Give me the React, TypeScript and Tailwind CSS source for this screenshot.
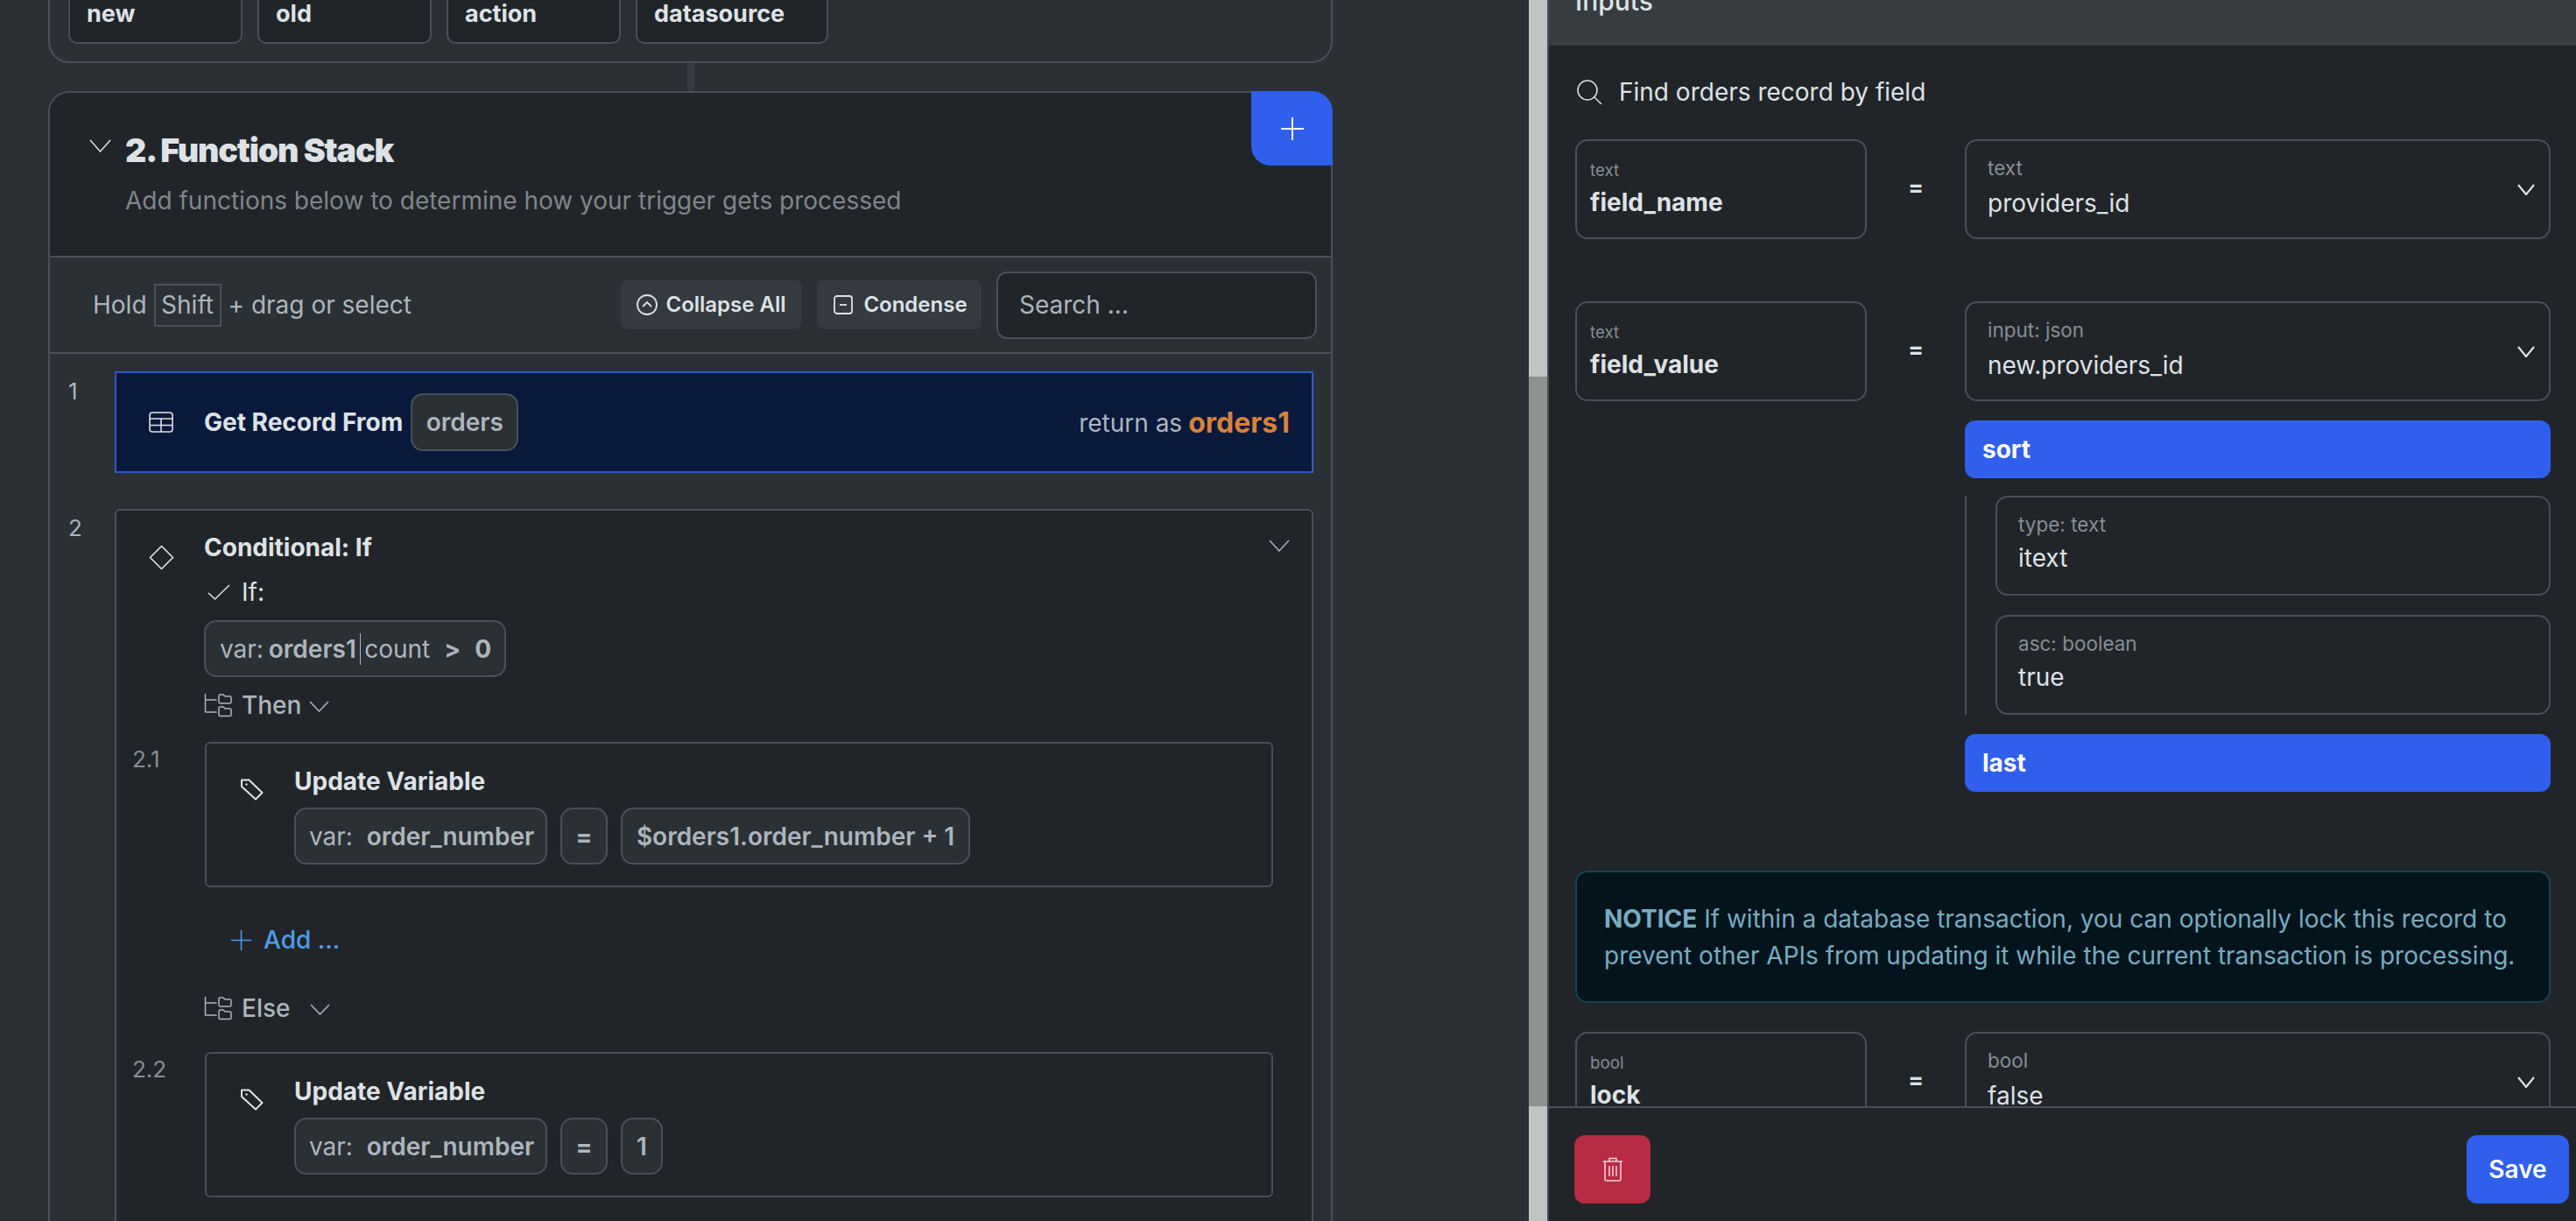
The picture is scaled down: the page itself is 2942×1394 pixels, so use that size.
import type { ReactNode } from "react"

function Chevron({ w = 24, h = 13, sw = 1.5, cls = "" }: { w?: number; h?: number; sw?: number; cls?: string }) {
    return (
        <svg width={w} height={h} viewBox={`0 0 ${w} ${h}`} fill="none" stroke="currentColor" strokeWidth={sw} className={"shrink-0 " + cls}>
            <polyline points={`1,1 ${w / 2},${h - 1} ${w - 1},1`} />
        </svg>
    )
}

function TableIcon() {
    return (
        <svg width="28" height="24" viewBox="0 0 28 24" fill="none" stroke="currentColor" strokeWidth="1.6" className="shrink-0">
            <rect x="1" y="1" width="26" height="22" rx="3" />
            <path d="M1 8h26M1 15.5h26M14 8v15" />
        </svg>
    )
}

function DiamondIcon() {
    return (
        <svg width="29" height="29" viewBox="0 0 29 29" fill="none" stroke="currentColor" strokeWidth="1.6" strokeLinejoin="round" className="shrink-0">
            <path d="M14.5 1.5 27.5 14.5 14.5 27.5 1.5 14.5Z" />
        </svg>
    )
}

function FolderTree() {
    return (
        <svg width="32" height="27" viewBox="0 0 32 27" fill="none" stroke="currentColor" strokeWidth="1.5" strokeLinejoin="round" className="shrink-0">
            <path d="M1.5 0v21h13M1.5 7h13" />
            <path d="M17 2.5q0-1.5 1.5-1.5h3.500l2 2h5.500q1.500 0 1.500 1.500v5q0 1.500-1.500 1.500h-11q-1.500 0-1.500-1.500z" />
            <path d="M17 16.500q0-1.500 1.500-1.500h3.500l2 2h5.500q1.500 0 1.500 1.500v5.500q0 1.500-1.500 1.500h-11q-1.500 0-1.500-1.500z" />
        </svg>
    )
}

function TagIcon() {
    return (
        <svg width="27" height="25" viewBox="0 0 27 25" fill="none" stroke="currentColor" strokeWidth="2" strokeLinejoin="round" className="shrink-0">
            <path d="M2 1.500h8.500L25.500 16 18 23.500 2 9z" />
            <circle cx="7.500" cy="6.500" r="1.200" fill="currentColor" stroke="none" />
        </svg>
    )
}

function Chip({ children, cls = "" }: { children: ReactNode; cls?: string }) {
    return (
        <div className={"flex h-[65px] items-center whitespace-pre rounded-[14px] border-2 border-[#495057] bg-[#2b3035] text-[28px] text-[#adb5bd] " + cls}>
            {children}
        </div>
    )
}

function UpdateVariable({ num, value, valueCls }: { num: string; value: string; valueCls: string }) {
    return (
        <div className="-ml-[82px] flex pr-[44px]">
            <div className="w-[83px] shrink-0 pt-[3px] text-[26px] leading-[34px] text-[#868e96]">{num}</div>
            <div className="flex h-[166px] flex-1 rounded-[6px] border-2 border-[#495057]">
                <div className="w-[100px] shrink-0 pl-[38px] pt-[40px] text-[#dee2e6]">
                    <TagIcon />
                </div>
                <div className="pt-[23px]">
                    <div className="text-[28px] font-bold leading-[40px] text-[#dee2e6]">Update Variable</div>
                    <div className="mt-[10px] flex gap-[15px]">
                        <Chip cls="w-[289px] pl-[15px]">
                            <span>var:  </span>
                            <span className="font-semibold">order_number</span>
                        </Chip>
                        <Chip cls="w-[54px] justify-center font-bold">=</Chip>
                        <Chip cls={"justify-center font-semibold " + valueCls}>{value}</Chip>
                    </div>
                </div>
            </div>
        </div>
    )
}

function Branch({ label, chevronCls }: { label: string; chevronCls: string }) {
    return (
        <div className="flex h-[34px] items-center text-[28px] text-[#adb5bd]">
            <FolderTree />
            <span className="ml-[11px] font-medium">{label}</span>
            <Chevron w={23} h={13} cls={chevronCls} />
        </div>
    )
}

function FieldBox({ label, name }: { label: string; name: string }) {
    return (
        <div className="h-[114px] w-[333px] shrink-0 rounded-[14px] border-2 border-[#495057] pl-[15px] pt-[19px]">
            <div className="text-[18.75px] leading-[30px] text-[#868e96]">{label}</div>
            <div className="mt-[1px] text-[28px] font-bold leading-[40px] text-[#dee2e6]">{name}</div>
        </div>
    )
}

function SelectBox({ label, value }: { label: string; value: string }) {
    return (
        <div className="flex h-[114px] flex-1 items-center justify-between rounded-[14px] border-2 border-[#495057] pl-[24px] pr-[16px]">
            <div className="-mt-[4px]">
                <div className="text-[22.5px] leading-[30px] text-[#868e96]">{label}</div>
                <div className="mt-[5px] text-[28px] leading-[40px] text-[#dee2e6]">{value}</div>
            </div>
            <Chevron w={20} h={13} sw={2.2} cls="text-[#dee2e6]" />
        </div>
    )
}

function ParamBox({ label, value }: { label: string; value: string }) {
    return (
        <div className="h-[114px] rounded-[14px] border-2 border-[#495057] pl-[24px] pt-[16px]">
            <div className="text-[22.5px] leading-[30px] text-[#868e96]">{label}</div>
            <div className="mt-[3px] text-[28px] leading-[40px] text-[#dee2e6]">{value}</div>
        </div>
    )
}

function BlueBar({ label }: { label: string }) {
    return (
        <div className="flex h-[66px] items-center rounded-[12px] bg-[#2f5fec] pl-[20px] text-[28px] font-bold text-white">{label}</div>
    )
}

function FieldRow({ children, cls = "" }: { children: ReactNode; cls?: string }) {
    return (
        <div className={"flex h-[114px] shrink-0 " + cls}>
            {children}
        </div>
    )
}

function Equals() {
    return <div className="flex w-[112px] shrink-0 items-center justify-center pb-[6px] text-[26px] font-bold text-[#dee2e6]">=</div>
}

export default function App() {
    const topChips = ["new", "old", "action", "datasource"]

    return (
        <div className="flex h-[1394px] w-[2942px] overflow-hidden bg-[#2b3035] font-['Inter',sans-serif] text-[#dee2e6]">
            {/* left canvas */}
            <div className="w-[1746px] shrink-0 pl-[55px] pr-[224px]">
                <div className="-mt-[128px] flex h-[200px] items-end gap-[17px] rounded-[24px] border-2 border-[#495057] pb-[20px] pl-[21px]">
                    {topChips.map((c) => (
                        <div key={c} className="flex h-[100px] min-w-[199px] items-end rounded-[10px] border-2 border-[#495057] bg-[#212529] pb-[14px] pl-[19px] pr-[48px] text-[27px] font-bold leading-[36px] text-[#dee2e6]">
                            {c}
                        </div>
                    ))}
                </div>
                <div className="mx-auto h-[32px] w-[8px] bg-[#343a40]" />

                <div className="relative rounded-t-[24px] border-2 border-b-0 border-[#495057]">
                    <div className="h-[186px] rounded-t-[22px] bg-[#212529] pl-[45px] pt-[43px]">
                        <div className="flex items-start">
                            <Chevron w={25} h={15} cls="mt-[10px] mr-[16px] text-[#dee2e6]" />
                            <div>
                                <div className="text-[37.5px] font-black leading-[45px] tracking-[-1.1px] text-[#dee2e6]">2. Function Stack</div>
                                <div className="mt-[13px] text-[28px] leading-[45px] text-[#80868c]">Add functions below to determine how your trigger gets processed</div>
                            </div>
                        </div>
                    </div>
                    <button className="absolute -right-[2px] -top-[2px] flex h-[85px] w-[93px] items-center justify-center rounded-bl-[22px] rounded-tr-[24px] bg-[#2f5fec]">
                        <svg width="26" height="26" viewBox="0 0 26 26" stroke="white" strokeWidth="2">
                            <path d="M13 0v26M0 13h26" />
                        </svg>
                    </button>

                    <div className="flex h-[112px] items-center border-y-2 border-[#495057] pl-[49px] pr-[16px] text-[28px] text-[#adb5bd]">
                        <span>Hold</span>
                        <span className="mx-[8px] flex h-[49px] w-[77px] items-center justify-center border-2 border-[#495057]">Shift</span>
                        <span>+ drag or select</span>
                        <div className="ml-auto flex h-[56px] w-[207px] items-center justify-center gap-[9px] rounded-[8px] bg-[#343a40] text-[24px] font-semibold text-[#dee2e6]">
                            <svg width="24" height="24" viewBox="0 0 24 24" fill="none" stroke="currentColor" strokeWidth="1.8">
                                <circle cx="12" cy="12" r="11" />
                                <polyline points="7,14 12,9 17,14" />
                            </svg>
                            Collapse All
                        </div>
                        <div className="ml-[17px] flex h-[56px] w-[188px] items-center justify-center gap-[12px] rounded-[8px] bg-[#343a40] pl-[3px] text-[24px] font-semibold text-[#dee2e6]">
                            <svg width="22" height="22" viewBox="0 0 22 22" fill="none" stroke="currentColor" strokeWidth="1.8">
                                <rect x="1" y="1" width="20" height="20" rx="3" />
                                <path d="M7 11h8" />
                            </svg>
                            Condense
                        </div>
                        <div className="ml-[17px] flex h-[77px] w-[366px] items-center rounded-[12px] border-2 border-[#495057] bg-[#212529] pl-[24px] text-[28px] text-[#adb5bd]">
                            Search ...
                        </div>
                    </div>

                    <div className="pl-[21px] pr-[20px] pt-[20px]">
                        <div className="flex">
                            <div className="w-[53px] shrink-0 pt-[6px] text-[26px] leading-[34px] text-[#adb5bd]">1</div>
                            <div className="flex h-[116px] flex-1 items-center border-2 border-[#3058d0] bg-[#08193b] pl-[37px] pr-[25px]">
                                <div className="w-[63px] shrink-0 text-[#dee2e6]">
                                    <TableIcon />
                                </div>
                                <span className="text-[28px] font-bold text-[#dee2e6]">Get Record From</span>
                                <Chip cls="ml-[9px] h-[66px] w-[123px] justify-center font-semibold">orders</Chip>
                                <span className="ml-auto mt-[2px] text-[28px] text-[#adb5bd]">return as</span>
                                <span className="ml-[7px] mt-[2px] text-[32px] font-bold text-[#d9813c]">orders1</span>
                            </div>
                        </div>

                        <div className="mt-[41px] flex">
                            <div className="w-[53px] shrink-0 pt-[5px] text-[26px] leading-[34px] text-[#adb5bd]">2</div>
                            <div className="flex h-[1000px] flex-1 rounded-[6px] border-2 border-[#495057] bg-[#212529]">
                                <div className="w-[100px] shrink-0 pl-[37px] pt-[39px] text-[#dee2e6]">
                                    <DiamondIcon />
                                </div>
                                <div className="flex-1 pt-[22px]">
                                    <div className="flex h-[40px] items-center justify-between pr-[25px]">
                                        <span className="text-[28px] font-bold text-[#dee2e6]">Conditional: If</span>
                                        <Chevron w={24} h={14} sw={1.4} cls="-mt-[4px] text-[#adb5bd]" />
                                    </div>
                                    <div className="mt-[14px] flex h-[34px] items-center pl-[4px] text-[28px]">
                                        <svg width="26" height="18" viewBox="0 0 26 18" fill="none" stroke="currentColor" strokeWidth="1.5" className="shrink-0">
                                            <polyline points="1,10 8.500,17 25,1" />
                                        </svg>
                                        <span className="ml-[13px] text-[#dee2e6]">If:</span>
                                    </div>
                                    <Chip cls="mt-[15px] w-[345px] pl-[16px] text-[#adb5bd]">
                                        <span className="-mr-[2px]">var: </span>
                                        <span className="font-semibold">orders1</span>
                                        <span className="mx-[4px] h-[36px] w-[1.500px] bg-[#adb5bd]" />
                                        <span>count</span>
                                        <span className="ml-[16px] font-bold">{">"}</span>
                                        <span className="ml-[16px] font-bold">0</span>
                                    </Chip>
                                    <div className="mt-[15px]">
                                        <Branch label="Then" chevronCls="ml-[9px] mt-[2px]" />
                                    </div>
                                    <div className="mt-[25px]">
                                        <UpdateVariable num="2.1" value="$orders1.order_number + 1" valueCls="w-[399px]" />
                                    </div>
                                    <div className="ml-[31px] mt-[43px] flex h-[34px] items-center gap-[14px] text-[28px] font-medium text-[#4d9de8]">
                                        <svg width="23" height="23" viewBox="0 0 23 23" stroke="currentColor" strokeWidth="1.6">
                                            <path d="M11.500 0v23M0 11.500h23" />
                                        </svg>
                                        Add ...
                                    </div>
                                    <div className="mt-[44px]">
                                        <Branch label="Else" chevronCls="ml-[23px] mt-[2px]" />
                                    </div>
                                    <div className="mt-[33px]">
                                        <UpdateVariable num="2.2" value="1" valueCls="w-[48px]" />
                                    </div>
                                </div>
                            </div>
                        </div>
                    </div>
                </div>
            </div>

            {/* scrollbar */}
            <div className="flex w-[21px] shrink-0 flex-col">
                <div className="h-[430px] bg-[#c1c4c3]" />
                <div className="h-[833px] bg-[#8f9190]" />
                <div className="flex-1 bg-[#c1c4c3]" />
            </div>

            {/* right panel */}
            <div className="flex min-w-0 flex-1 flex-col border-l-2 border-[#495057] bg-[#212529]">
                <div className="h-[52px] shrink-0 bg-[#373c41] pl-[30px]">
                    <div className="-mt-[18px] text-[30px] font-medium leading-[38px] text-[#dee2e6]">Inputs</div>
                </div>
                <div className="flex min-h-0 flex-1 flex-col overflow-hidden pl-[30px] pr-[29px] pt-[33px]">
                    <div className="flex h-[40px] shrink-0 items-center gap-[19px] pl-[2px] text-[28px] text-[#dee2e6]">
                        <svg width="29" height="28" viewBox="0 0 29 28" fill="none" stroke="currentColor" strokeWidth="1.500">
                            <circle cx="12" cy="12" r="11" />
                            <path d="M20 20l8 8" />
                        </svg>
                        Find orders record by field
                    </div>

                    <FieldRow cls="mt-[34px]">
                        <FieldBox label="text" name="field_name" />
                        <Equals />
                        <SelectBox label="text" value="providers_id" />
                    </FieldRow>

                    <FieldRow cls="mt-[71px]">
                        <FieldBox label="text" name="field_value" />
                        <Equals />
                        <SelectBox label="input: json" value="new.providers_id" />
                    </FieldRow>

                    <div className="ml-[445px] mt-[22px] shrink-0">
                        <BlueBar label="sort" />
                        <div className="mt-[20px] flex flex-col gap-[22px] border-l-2 border-[#495057] pl-[33px]">
                            <ParamBox label="type: text" value="itext" />
                            <ParamBox label="asc: boolean" value="true" />
                        </div>
                        <div className="mt-[22px]">
                            <BlueBar label="last" />
                        </div>
                    </div>

                    <div className="mt-[90px] flex h-[151px] shrink-0 items-center rounded-[14px] border-2 border-[#164352] bg-[#03141c] pl-[31px] pr-[14px] text-[28px] leading-[42px] text-[#78acc0]">
                        <p>
                            <b className="font-bold">NOTICE</b> If within a database transaction, you can optionally lock this record to prevent other APIs from updating it while the current transaction is processing.
                        </p>
                    </div>

                    <FieldRow cls="mt-[33px]">
                        <FieldBox label="bool" name="lock" />
                        <Equals />
                        <SelectBox label="bool" value="false" />
                    </FieldRow>
                </div>
                <div className="flex h-[131px] shrink-0 items-start justify-between border-t-2 border-[#495057] pl-[29px] pr-[8px] pt-[31px]">
                    <button className="flex h-[78px] w-[87px] items-center justify-center rounded-[12px] bg-[#b92a45] text-[#f3d6dc]">
                        <svg width="24" height="28" viewBox="0 0 24 28" fill="none" stroke="currentColor" strokeWidth="1.500">
                            <path d="M1 5h22M8 5V1.500h8V5M3 5v20q0 2 2 2h14q2 0 2-2V5M8 10v12M12 10v12M16 10v12" />
                        </svg>
                    </button>
                    <button className="flex h-[78px] w-[117px] items-center justify-center rounded-[12px] bg-[#2f5fec] text-[28px] font-semibold text-white">
                        Save
                    </button>
                </div>
            </div>
        </div>
    )
}
